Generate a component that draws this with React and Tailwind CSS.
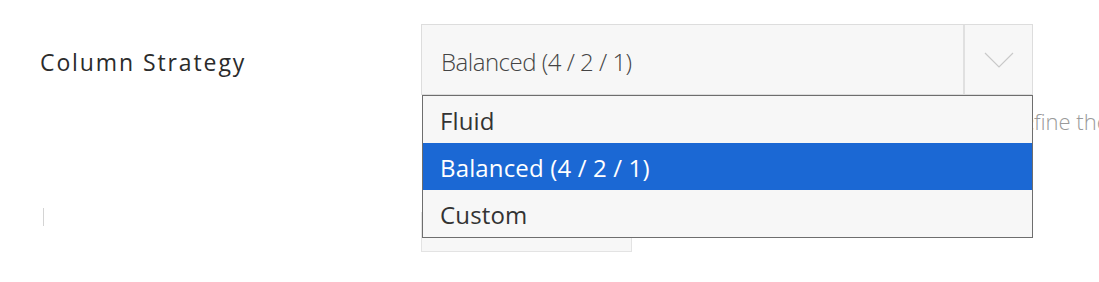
import React from "react";

export default function App() {
  const options = ["Fluid", "Balanced (4 / 2 / 1)", "Custom"];
  const selected = 1;
  return (
    <div className="w-[1099px] h-[282px] overflow-hidden bg-white font-['Open_Sans','Noto_Sans',sans-serif]">
      <div className="flex pt-[24px]">
        <div className="w-[421px] flex flex-col pl-[40px]">
          <div className="mt-[24px] text-[23px] leading-[28px] tracking-[1.9px] text-[#2b2b2b]">
            Column Strategy
          </div>
          <div className="mt-[132px] ml-[3px] w-px h-[18px] bg-[#d4d4d4]" />
        </div>
        <div className="w-[612px] relative">
          <div className="h-[71px] border border-[#dddddd] bg-[#f7f7f7] flex">
            <div className="flex-1 flex items-center pl-[19px] pt-[4px] text-[24px] font-light tracking-[-0.5px] text-[#444444]">
              Balanced (4 / 2 / 1)
            </div>
            <div className="w-[69px] border-l-2 border-[#e0e0e0] flex items-center justify-center">
              <svg width="30" height="16" viewBox="0 0 30 16" fill="none">
                <polyline points="1,1 15,15 29,1" stroke="#c9c9c9" strokeWidth="1.2" />
              </svg>
            </div>
          </div>
          <div className="mt-[12px] whitespace-nowrap text-[22px] leading-[28px] font-light text-[#9a9a9a]">
            <span className="inline-block w-[613px] overflow-hidden align-top">Use the preset to decide how many columns each breakpoint shows, or de</span>fine the widths yourself
          </div>
          <div className="mt-[77px] w-[211px] h-[40px] border border-[#e3e3e3] bg-[#f7f7f7]" />
          <div className="absolute top-[71px] left-[1px] right-0 border border-[#6e6e6e] bg-[#f7f7f7]">
            {options.map((o, i) => (
              <div
                key={o}
                className={
                  "h-[47px] flex items-center pl-[17px] pt-[2px] text-[24px] tracking-[0.15px] " +
                  (i === selected ? "bg-[#1b68d4] text-white" : "text-[#333333]")
                }
              >
                {o}
              </div>
            ))}
          </div>
        </div>
      </div>
    </div>
  );
}
